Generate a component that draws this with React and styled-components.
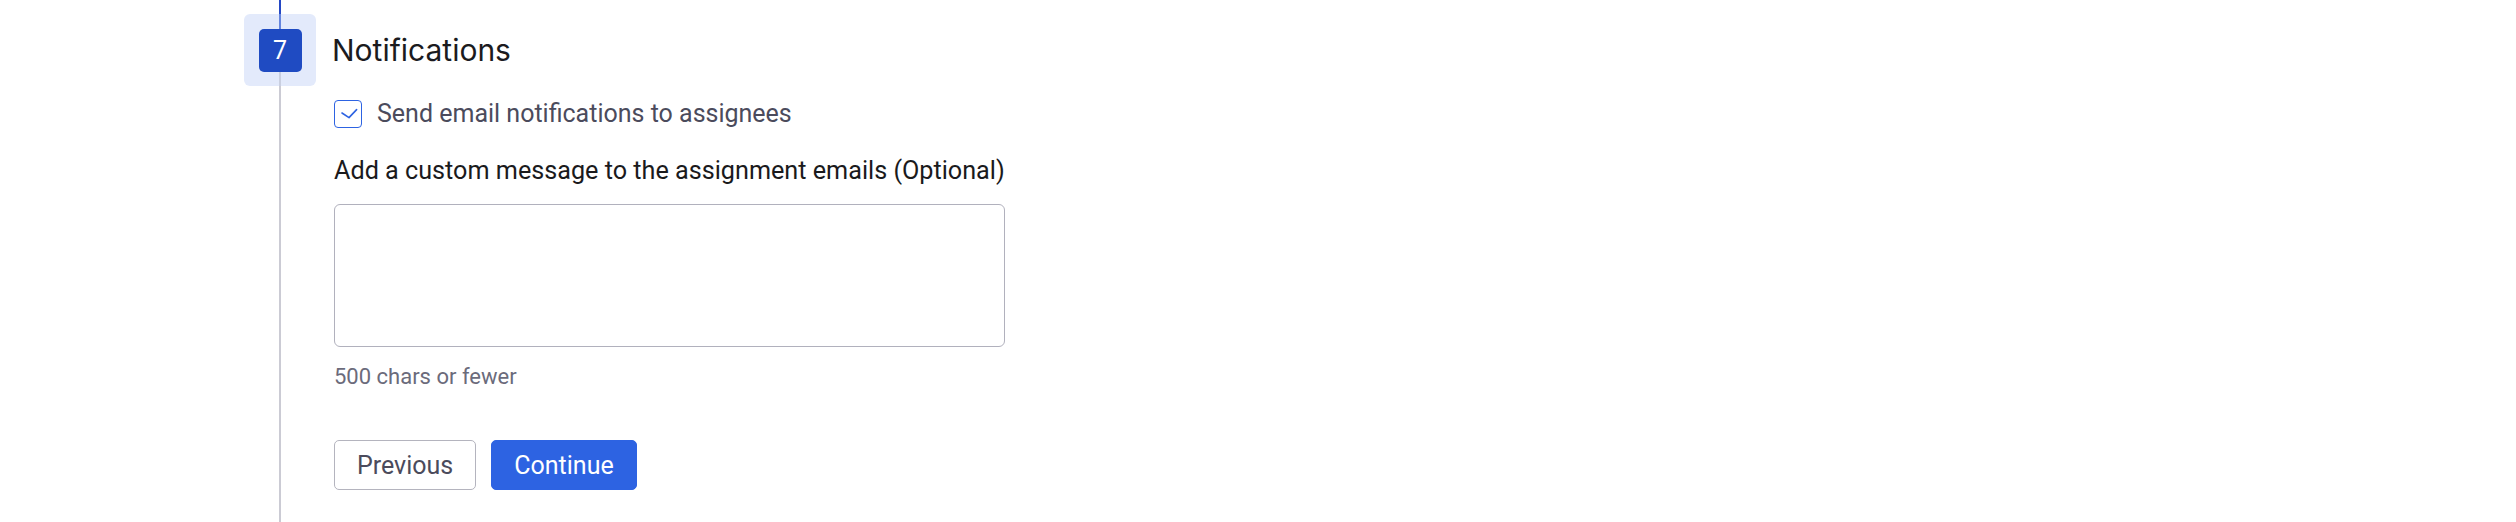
import React from 'react';
import styled, { createGlobalStyle } from 'styled-components';

const GlobalStyle = createGlobalStyle`
  html, body {
    margin: 0;
    padding: 0;
    background: #ffffff;
  }
  body {
    font-family: Roboto, "Liberation Sans", Arial, sans-serif;
  }
`;

export default function App() {
  return (
    <>
      <GlobalStyle />
      <StyledPage>
        <StyledRail>
          <StyledBadge>
            <StyledStub $done />
            <StyledStepNumber>7</StyledStepNumber>
            <StyledStub />
          </StyledBadge>
        </StyledRail>
        <StyledContent>
          <StyledTitle>Notifications</StyledTitle>
          <StyledCheckRow>
            <StyledCheckbox>
              <svg width="28" height="28" viewBox="0 0 28 28" fill="none">
                <path
                  d="M8 13l7 4.6L22.6 9.6"
                  stroke="#2d63e2"
                  strokeWidth="1.6"
                  strokeLinecap="round"
                  strokeLinejoin="round"
                />
              </svg>
            </StyledCheckbox>
            <span>Send email notifications to assignees</span>
          </StyledCheckRow>
          <StyledLabel htmlFor="custom-message">
            Add a custom message to the assignment emails (Optional)
          </StyledLabel>
          <StyledTextArea id="custom-message" />
          <StyledHint>500 chars or fewer</StyledHint>
          <StyledActions>
            <StyledButton>Previous</StyledButton>
            <StyledButton $primary>Continue</StyledButton>
          </StyledActions>
        </StyledContent>
      </StyledPage>
    </>
  );
}

export const StyledPage = styled.div`
  display: flex;
  min-height: 100vh;
  padding-left: 244px;
  box-sizing: border-box;
`;

export const StyledRail = styled.div`
  flex: none;
  width: 72px;
  background:
    linear-gradient(#2447c4, #2447c4) center top / 2px 50px no-repeat,
    linear-gradient(#cbcbd4, #cbcbd4) center 50px / 2px 100% no-repeat;
`;

export const StyledBadge = styled.div`
  margin-top: 14px;
  width: 72px;
  height: 72px;
  box-sizing: border-box;
  border-radius: 6px;
  background: #e3eafb;
  display: flex;
  flex-direction: column;
  align-items: center;
`;

export const StyledStub = styled.div`
  flex: 1;
  width: 2px;
  background: ${({ $done }) => ($done ? '#6585de' : '#c9cfe0')};
`;

export const StyledStepNumber = styled.div`
  flex: none;
  width: 43px;
  height: 43px;
  border-radius: 5px;
  background: #1f4bc2;
  color: #ffffff;
  font-size: 25px;
  display: flex;
  align-items: center;
  justify-content: center;
`;

export const StyledContent = styled.div`
  display: flex;
  flex-direction: column;
  align-items: flex-start;
  margin-left: 18px;
`;

export const StyledTitle = styled.h2`
  margin: 14px 0 0 -2px;
  height: 72px;
  display: flex;
  align-items: center;
  font-family: Inter, "Noto Sans", sans-serif;
  font-weight: 400;
  font-size: 30px;
  color: #1b1b1e;
`;

export const StyledCheckRow = styled.label`
  margin-top: 14px;
  display: flex;
  align-items: center;
  gap: 15px;
  font-size: 25px;
  line-height: 28px;
  color: #4b4b5c;
`;

export const StyledCheckbox = styled.span`
  flex: none;
  width: 28px;
  height: 28px;
  box-sizing: border-box;
  border: 1.5px solid #2d63e2;
  border-radius: 4px;
  display: flex;
  align-items: center;
  justify-content: center;
  svg {
    margin: -1.5px;
  }
`;

export const StyledLabel = styled.label`
  margin-top: 27px;
  font-size: 25.2px;
  line-height: 32px;
  color: #1a1a1c;
`;

export const StyledTextArea = styled.textarea`
  margin-top: 17px;
  width: 671px;
  height: 143px;
  box-sizing: border-box;
  border: 1px solid #b1b1bd;
  border-radius: 6px;
  resize: none;
  font: inherit;
  outline: none;
`;

export const StyledHint = styled.div`
  margin-top: 16px;
  font-size: 22px;
  line-height: 28px;
  color: #6b6b7b;
`;

export const StyledActions = styled.div`
  margin-top: 49px;
  display: flex;
  gap: 15px;
`;

export const StyledButton = styled.button`
  height: 50px;
  padding: 0 22px;
  box-sizing: border-box;
  border-radius: 5px;
  border: 1px solid ${({ $primary }) => ($primary ? '#2d63e2' : '#b4b4be')};
  background: ${({ $primary }) => ($primary ? '#2d63e2' : '#ffffff')};
  color: ${({ $primary }) => ($primary ? '#ffffff' : '#4b4b5c')};
  font-family: Roboto, sans-serif;
  font-size: 25px;
  cursor: pointer;
`;
